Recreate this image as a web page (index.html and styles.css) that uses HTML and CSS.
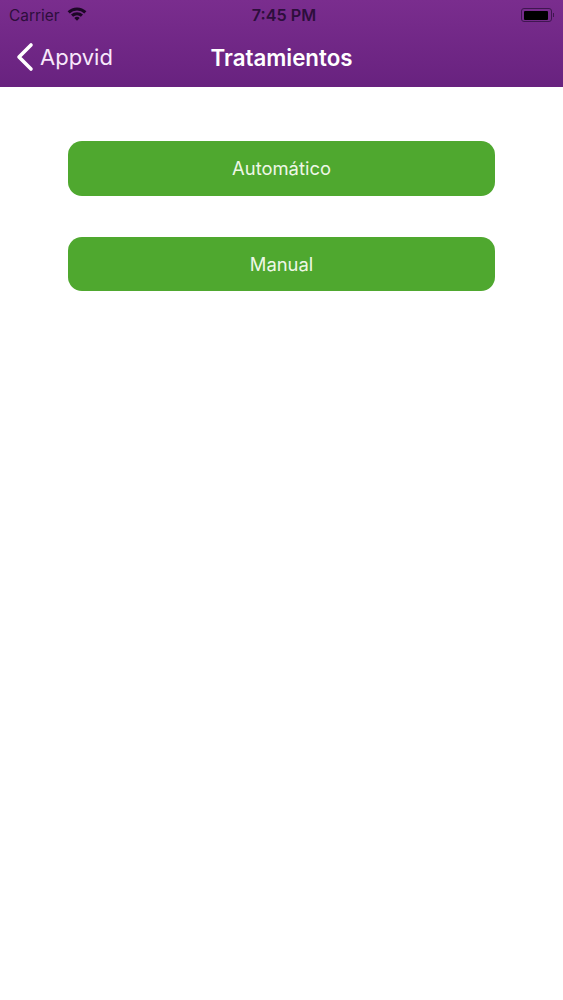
FILE: index.html
```html
<!DOCTYPE html>
<html lang="en">

<head>
    <meta charset="UTF-8">
    <meta name="viewport" content="width=device-width, initial-scale=1.0">
    <title>Tratamientos</title>
    <link rel="stylesheet" href="styles.css">
</head>

<body>
    <div class="header">
        <div class="status-bar">
            <div class="status-left">
                <span class="carrier">Carrier</span>
                <svg class="wifi" width="20" height="15" viewBox="0 0 20 15">
                    <path d="M0.6 5.2 A13.5 13.5 0 0 1 19.4 5.2 L17.3 7.4 A10.5 10.5 0 0 0 2.7 7.4 Z" />
                    <path d="M4 8.6 A8.7 8.7 0 0 1 16 8.6 L13.9 10.8 A5.8 5.8 0 0 0 6.1 10.8 Z" />
                    <path d="M7.3 12 A3.9 3.9 0 0 1 12.7 12 L10 14.8 Z" />
                </svg>
            </div>
            <span class="clock">7:45 PM</span>
            <div class="battery">
                <div class="battery-body">
                    <div class="battery-level"></div>
                </div>
                <div class="battery-cap"></div>
            </div>
        </div>
        <div class="nav-bar">
            <div class="back">
                <svg class="back-arrow" width="20" height="30" viewBox="0 0 20 30">
                    <path d="M16 3 L4 15 L16 27" />
                </svg>
                <span>Appvid</span>
            </div>
            <div class="nav-title">Tratamientos</div>
        </div>
    </div>

    <div class="content">
        <a class="btn">Automático</a>
        <a class="btn">Manual</a>
    </div>
</body>

</html>
```

FILE: styles.css
```css
body {
    margin: 0;
    padding: 0;
    font-family: Inter, "Liberation Sans", sans-serif;
    background: #fff;
}

.header {
    height: 87px;
    background: linear-gradient(#7a2d8e, #68227f);
    display: flex;
    flex-direction: column;
}

.status-bar {
    height: 30px;
    display: grid;
    grid-template-columns: 1fr auto 1fr;
    align-items: center;
    padding: 0 9px 0 9px;
    color: #2d0e3c;
}

.status-left {
    display: flex;
    align-items: center;
    gap: 8px;
}

.carrier {
    font-size: 15.4px;
}

.wifi {
    fill: #1c0726;
    margin-top: -4px;
}

.clock {
    font-size: 16.2px;
    font-weight: 600;
    margin-left: 5px;
}

.battery {
    display: flex;
    align-items: center;
    justify-content: flex-end;
    gap: 1px;
}

.battery-body {
    width: 31px;
    height: 14px;
    box-sizing: border-box;
    border: 1px solid #3f1650;
    border-radius: 3px;
    padding: 1.5px;
}

.battery-level {
    width: 24px;
    height: 100%;
    background: #000;
    border-radius: 1px;
}

.battery-cap {
    width: 1px;
    height: 4px;
    background: #3f1650;
}

.nav-bar {
    flex: 1;
    position: relative;
    display: flex;
    align-items: center;
    justify-content: center;
    color: #fff;
    padding-bottom: 3px;
}

.back {
    position: absolute;
    left: 15px;
    top: 0;
    bottom: 3px;
    display: flex;
    align-items: center;
    gap: 5px;
    font-size: 22px;
    color: #f8e8fb;
}

.back-arrow {
    fill: none;
    stroke: #fff;
    stroke-width: 3.6;
    stroke-linecap: round;
    stroke-linejoin: round;
}

.nav-title {
    font-size: 22.3px;
    font-weight: 600;
}

.content {
    display: flex;
    flex-direction: column;
    gap: 41px;
    padding: 54px 68px 0;
}

.btn {
    height: 54.6px;
    display: flex;
    align-items: center;
    justify-content: center;
    background: #4fa82f;
    border-radius: 14px;
    color: #eef7e6;
    font-size: 18.4px;
}
```
